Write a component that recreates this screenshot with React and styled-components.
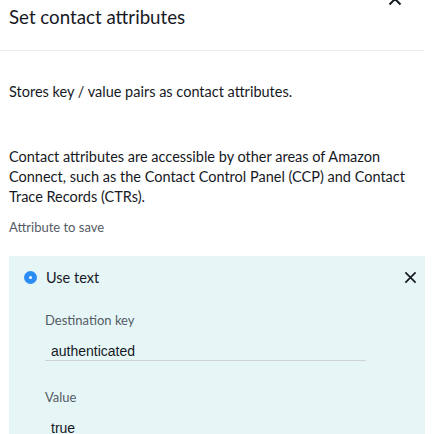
import React from "react";
import styled, { createGlobalStyle } from "styled-components";

const GlobalStyle = createGlobalStyle`
    html, body {
        margin: 0;
        padding: 0;
        background: #ffffff;
    }
    body {
        font-family: Lato, "Noto Sans", sans-serif;
        color: #16191f;
    }
`;

const Drawer = styled.div`
    width: 435px;
    height: 434px;
    overflow: hidden;
    background: #ffffff;
`;

const Header = styled.div`
    position: relative;
    display: flex;
    align-items: flex-start;
    width: 424px;
    height: 51px;
    border-bottom: 1px solid #eaeded;
    box-sizing: border-box;
    padding: 5px 0 0 9px;
`;

const Title = styled.h2`
    margin: 0;
    font-size: 18.7px;
    font-weight: 400;
    line-height: 24px;
    color: #16191f;
`;

const HeaderClose = styled.button`
    all: unset;
    position: absolute;
    top: -9px;
    right: 21px;
    width: 16px;
    height: 16px;
    display: flex;
    align-items: center;
    justify-content: center;
`;

const Body = styled.div`
    padding: 0 9px;
`;

const Text = styled.p`
    margin: ${(props) => props.margin || "0"};
    font-size: 14.5px;
    line-height: 20px;
    color: #16191f;
`;

const FieldLabel = styled.div`
    margin: ${(props) => props.margin || "0"};
    font-size: 13px;
    line-height: 18px;
    color: #545b64;
`;

const Panel = styled.div`
    margin-top: 20px;
    width: 416px;
    height: 200px;
    background: #e6f6f7;
    box-sizing: border-box;
    padding: 10px 8px 0 15px;
`;

const PanelTop = styled.div`
    display: flex;
    align-items: center;
    justify-content: space-between;
    height: 22px;
`;

const RadioWrap = styled.label`
    display: flex;
    align-items: center;
    gap: 9px;
    font-size: 14.5px;
    color: #16191f;
`;

const Radio = styled.span`
    width: 13px;
    height: 13px;
    border-radius: 50%;
    background: #2b8cf4;
    display: flex;
    align-items: center;
    justify-content: center;

    &::after {
        content: "";
        width: 3px;
        height: 3px;
        border-radius: 50%;
        background: #ffffff;
    }
`;

const IconButton = styled.button`
    all: unset;
    display: flex;
`;

const Field = styled.div`
    padding-left: 21px;
`;

const Input = styled.div`
    width: 321px;
    height: 32px;
    box-sizing: border-box;
    padding: 13px 0 0 6px;
    border-bottom: ${(props) => (props.underline ? "1px solid #cfd3d4" : "none")};
    font-family: "Liberation Sans", Arial, sans-serif;
    font-size: 14px;
    line-height: 18px;
    color: #16191f;
`;

const Cross = ({ size = 14, weight = 2 }) => (
    <svg width={size} height={size} viewBox="0 0 14 14">
        <path d="M1.5 1.5 L12.5 12.5 M12.5 1.5 L1.5 12.5" stroke="#16191f" strokeWidth={weight} fill="none" />
    </svg>
);

export default function App() {
    return (
        <>
            <GlobalStyle />
            <Drawer>
                <Header>
                    <Title>Set contact attributes</Title>
                    <HeaderClose aria-label="Close">
                        <Cross size={14} weight={2} />
                    </HeaderClose>
                </Header>
                <Body>
                    <Text margin="31px 0 0 0">Stores key / value pairs as contact attributes.</Text>
                    <Text margin="45px 0 0 0">
                        Contact attributes are accessible by other areas of Amazon Connect, such as the Contact Control Panel (CCP) and Contact Trace Records (CTRs).
                    </Text>
                    <FieldLabel margin="11px 0 0 0">Attribute to save</FieldLabel>
                    <Panel>
                        <PanelTop>
                            <RadioWrap>
                                <Radio />
                                Use text
                            </RadioWrap>
                            <IconButton aria-label="Remove">
                                <Cross size={13} weight={1.8} />
                            </IconButton>
                        </PanelTop>
                        <Field>
                            <FieldLabel margin="23px 0 0 0">Destination key</FieldLabel>
                            <Input underline>authenticated</Input>
                            <FieldLabel margin="27px 0 0 0">Value</FieldLabel>
                            <Input>true</Input>
                        </Field>
                    </Panel>
                </Body>
            </Drawer>
        </>
    );
}
